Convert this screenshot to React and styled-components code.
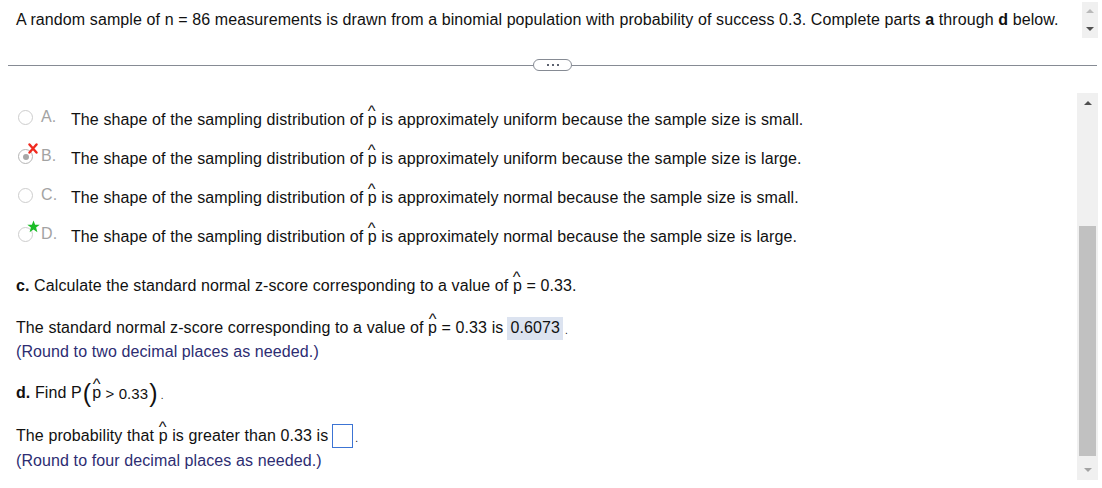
import React from 'react';
import styled, { createGlobalStyle } from 'styled-components';

const GlobalStyle = createGlobalStyle`
  html, body {
    margin: 0;
    padding: 0;
    background: #ffffff;
  }
  body {
    font-family: "Liberation Sans", Arial, sans-serif;
    font-size: 16px;
    letter-spacing: 0.1px;
    color: #111;
    overflow: hidden;
  }
`;

const Page = styled.div`
  width: 1102px;
  height: 488px;
  display: flex;
  flex-direction: column;
`;

const Header = styled.div`
  height: 55px;
  display: flex;
  align-items: flex-start;
  justify-content: space-between;
  padding: 0 4px 0 16px;
  box-sizing: border-box;
`;

const Prompt = styled.p`
  margin: 11px 0 0;
  line-height: 18px;
`;

const MiniScroll = styled.div`
  width: 16px;
  height: 36px;
  margin-top: 2px;
  background: #f0f0f0;
  display: flex;
  flex-direction: column;
  align-items: center;
  justify-content: space-around;
`;

const Arrow = styled.span`
  width: 0;
  height: 0;
  border-left: 4px solid transparent;
  border-right: 4px solid transparent;
  ${p => (p.$down
    ? `border-top: 4px solid ${p.$color};`
    : `border-bottom: 4px solid ${p.$color};`)}
`;

const DividerRow = styled.div`
  height: 20px;
  margin: 0 5px 0 8px;
  display: flex;
  align-items: center;
`;

const Line = styled.div`
  flex: 1;
  height: 1px;
  background: #868b94;
`;

const Handle = styled.div`
  width: 37px;
  height: 10px;
  border: 1px solid #868b94;
  border-radius: 6px;
  display: flex;
  align-items: center;
  justify-content: center;
  gap: 3px;
  background: #fff;
`;

const Dot = styled.span`
  width: 2px;
  height: 2px;
  background: #5d6370;
`;

const Pane = styled.div`
  flex: 1;
  display: flex;
  min-height: 0;
`;

const Content = styled.div`
  flex: 1;
  padding: 25px 0 0 16px;
`;

const Options = styled.div`
  display: flex;
  flex-direction: column;
`;

const Option = styled.div`
  height: 39px;
  display: flex;
  align-items: center;
`;

const RadioWrap = styled.span`
  position: relative;
  width: 15px;
  height: 15px;
  margin: -4px 0 0 2px;
`;

const Radio = styled.span`
  box-sizing: border-box;
  width: 15px;
  height: 15px;
  border-radius: 50%;
  border: 1.5px solid ${p => (p.$selected ? '#b5b5b5' : '#cdcdcd')};
  background: #fff;
  display: flex;
  align-items: center;
  justify-content: center;

  &::after {
    content: '';
    width: 6px;
    height: 6px;
    border-radius: 50%;
    background: ${p => (p.$selected ? '#a8a8a8' : 'transparent')};
  }
`;

const Mark = styled.svg`
  position: absolute;
  left: 10px;
  top: -6px;
`;

const Letter = styled.span`
  width: 30px;
  margin-left: 8px;
  color: #a3a3a3;
  line-height: 18px;
  margin-top: -6px;
`;

const OptionText = styled.span`
  line-height: 18px;
`;

const Hat = styled.span`
  position: relative;
  display: inline-block;

  &::before {
    content: '^';
    position: absolute;
    left: 0.5px;
    top: -8px;
    font-size: 15px;
    line-height: 15px;
    transform: scaleX(1.1);
  }
`;

const QuestionLine = styled.div`
  margin-top: ${p => p.$top}px;
  height: ${p => p.$h || 20}px;
  display: flex;
  align-items: center;
  white-space: pre;
  color: ${p => (p.$note ? '#2d2d72' : '#111')};
`;

const Answer = styled.span`
  background: #dce3f0;
  padding: 0 3px;
  margin-left: 4px;
  height: 23px;
  display: inline-flex;
  align-items: center;
`;

const Period = styled.span`
  font-size: 10px;
  align-self: flex-end;
  margin: 0 0 4px 2px;
`;

const EmptyBox = styled.span`
  box-sizing: border-box;
  width: 21px;
  height: 24px;
  border: 1px solid #3c74d4;
  margin-left: 4px;
`;

const Paren = styled.span`
  font-size: 25px;
  line-height: 22px;
  margin: 0 1px;
  transform: scaleY(1.05);
`;

const Small = styled.span`
  font-size: 15px;
`;

const Scrollbar = styled.div`
  width: 21px;
  margin: 18px 4px 8px 0;
  background: #f0f0f0;
  display: flex;
  flex-direction: column;
  align-items: center;
`;

const ScrollArrow = styled.div`
  height: 20px;
  display: flex;
  align-items: center;
  justify-content: center;
`;

const Thumb = styled.div`
  width: 17px;
  height: 230px;
  margin-top: 113px;
  background: #c1c1c1;
`;

const Spacer = styled.div`
  flex: 1;
`;

const PHat = () => <Hat>p</Hat>;

const XMark = () => (
  <Mark width="10" height="11" viewBox="0 0 10 11">
    <path d="M1.5 1.5 L8.5 9.5 M8.5 1.5 L1.5 9.5" stroke="#f02a1f" strokeWidth="2.4" strokeLinecap="round" />
  </Mark>
);

const StarMark = () => (
  <Mark width="13" height="13" viewBox="0 0 12 12" style={{ left: 9, top: -7 }}>
    <path
      d="M6 0.4 L7.5 4.3 L11.7 4.4 L8.4 7 L9.6 11.2 L6 8.7 L2.4 11.2 L3.6 7 L0.3 4.4 L4.5 4.3 Z"
      fill="#1bbd27"
    />
  </Mark>
);

const options = [
  { letter: 'A', shape: 'uniform', size: 'small' },
  { letter: 'B', shape: 'uniform', size: 'large', selected: true, mark: 'x' },
  { letter: 'C', shape: 'normal', size: 'small' },
  { letter: 'D', shape: 'normal', size: 'large', mark: 'star' },
];

export default function App() {
  return (
    <Page>
      <GlobalStyle />
      <Header>
        <Prompt>
          A random sample of n = 86 measurements is drawn from a binomial population with probability of success 0.3. Complete parts <b>a</b> through <b>d</b> below.
        </Prompt>
        <MiniScroll>
          <Arrow $color="#b9b9b9" />
          <Arrow $down $color="#505050" />
        </MiniScroll>
      </Header>

      <DividerRow>
        <Line />
        <Handle>
          <Dot />
          <Dot />
          <Dot />
        </Handle>
        <Line />
      </DividerRow>

      <Pane>
        <Content>
          <Options>
            {options.map(o => (
              <Option key={o.letter}>
                <RadioWrap>
                  <Radio $selected={o.selected} />
                  {o.mark === 'x' && <XMark />}
                  {o.mark === 'star' && <StarMark />}
                </RadioWrap>
                <Letter>{o.letter}.</Letter>
                <OptionText>
                  The shape of the sampling distribution of <PHat /> is approximately {o.shape} because the sample size is {o.size}.
                </OptionText>
              </Option>
            ))}
          </Options>

          <QuestionLine $top={20}>
            <b>c.</b> Calculate the standard normal z-score corresponding to a value of <PHat /> = 0.33.
          </QuestionLine>

          <QuestionLine $top={20} $h={24}>
            The standard normal z-score corresponding to a value of <PHat /> = 0.33 is
            <Answer>0.6073</Answer>
            <Period>.</Period>
          </QuestionLine>
          <QuestionLine $top={2} $note>
            (Round to two decimal places as needed.)
          </QuestionLine>

          <QuestionLine $top={19} $h={24}>
            <b>d.</b> Find P
            <Paren>(</Paren>
            <PHat />
            <Small> &gt; 0.33</Small>
            <Paren>)</Paren>
            <Period>.</Period>
          </QuestionLine>

          <QuestionLine $top={19} $h={24}>
            The probability that <PHat /> is greater than 0.33 is
            <EmptyBox />
            <Period>.</Period>
          </QuestionLine>
          <QuestionLine $top={3} $note>
            (Round to four decimal places as needed.)
          </QuestionLine>
        </Content>

        <Scrollbar>
          <ScrollArrow>
            <Arrow $color="#505050" />
          </ScrollArrow>
          <Thumb />
          <Spacer />
          <ScrollArrow>
            <Arrow $down $color="#a3a3a3" />
          </ScrollArrow>
        </Scrollbar>
      </Pane>
    </Page>
  );
}
